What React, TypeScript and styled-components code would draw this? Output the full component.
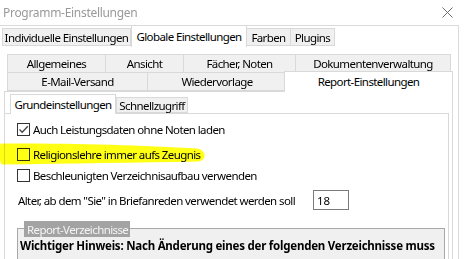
import styled, { createGlobalStyle } from 'styled-components';

const Global = createGlobalStyle`
  html, body {
    margin: 0;
    padding: 0;
    background: #fff;
  }
  body {
    font-family: "Noto Sans", "DejaVu Sans", sans-serif;
    font-size: 11.5px;
    letter-spacing: -0.6px;
    color: #000;
  }
`;

const Window = styled.div`
  width: 464px;
  height: 259px;
  overflow: hidden;
  display: flex;
  flex-direction: column;
  background: #fff;
`;

const TitleBar = styled.div`
  height: 25px;
  flex: none;
  display: flex;
  align-items: center;
  justify-content: space-between;
  padding: 0 11px 0 3px;
  color: #999;
  font-size: 12px;
  letter-spacing: -0.3px;
`;

const Client = styled.div`
  flex: 1;
  width: 458px;
  border-top: 1px solid #dadada;
  border-right: 1px solid #dadada;
  display: flex;
  flex-direction: column;
  min-height: 0;
`;

const TabRow = styled.div<{ $h: number; $pl: number }>`
  display: flex;
  align-items: flex-end;
  height: ${(p) => p.$h}px;
  padding-left: ${(p) => p.$pl}px;
  flex: none;
`;

const Tab = styled.div<{ $w: number; $h: number; $first?: boolean; $noTop?: boolean }>`
  box-sizing: border-box;
  width: ${(p) => p.$w}px;
  height: ${(p) => p.$h}px;
  background: #f0f0f0;
  border: 1px solid #d9d9d9;
  border-left: ${(p) => (p.$first ? '1px solid #d9d9d9' : 'none')};
  border-top: ${(p) => (p.$noTop ? 'none' : '1px solid #d9d9d9')};
  display: flex;
  align-items: center;
  justify-content: center;
  white-space: nowrap;
`;

const ActiveTab = styled.div<{ $w: number; $h: number; $ml?: number; $mt?: number }>`
  box-sizing: border-box;
  position: relative;
  z-index: 2;
  width: ${(p) => p.$w}px;
  height: ${(p) => p.$h}px;
  margin-left: ${(p) => p.$ml ?? 0}px;
  margin-top: ${(p) => p.$mt ?? 0}px;
  margin-bottom: -1px;
  background: #fff;
  border: 1px solid #d9d9d9;
  border-bottom: none;
  display: flex;
  align-items: center;
  justify-content: center;
  padding-bottom: 1px;
  white-space: nowrap;
`;

const Page = styled.div`
  flex: 1;
  display: flex;
  flex-direction: column;
  padding-top: 8px;
  min-height: 0;
`;

const MultiRows = styled.div`
  display: flex;
  flex-direction: column;
  padding-left: 7px;
`;

const ReportPanel = styled.div`
  flex: 1;
  margin-left: 4px;
  width: 449px;
  box-sizing: border-box;
  border: 1px solid #d9d9d9;
  border-bottom: none;
  display: flex;
  flex-direction: column;
  min-height: 0;
`;

const SubPanel = styled.div`
  flex: 1;
  position: relative;
  margin-right: 3px;
  border-top: 1px solid #d9d9d9;
  border-right: 1px solid #d9d9d9;
  padding-left: 12px;
  padding-right: 3px;
  display: flex;
  flex-direction: column;
`;

const CheckRow = styled.label<{ $mt: number }>`
  position: relative;
  display: flex;
  align-items: center;
  height: 13px;
  margin-top: ${(p) => p.$mt}px;
  gap: 3px;
  white-space: nowrap;
`;

const Box = styled.span`
  box-sizing: border-box;
  width: 13px;
  height: 13px;
  flex: none;
  border: 1px solid #333;
  background: #fff;
  display: flex;
  align-items: center;
  justify-content: center;
`;

const Highlight = styled.svg`
  position: absolute;
  left: -17px;
  top: -5px;
  width: 210px;
  height: 22px;
  mix-blend-mode: multiply;
  pointer-events: none;
`;

const FieldRow = styled.div`
  display: grid;
  grid-template-columns: 295px 36px;
  align-items: center;
  margin-top: 8px;
  padding-left: 1px;
  white-space: nowrap;
`;

const NumberInput = styled.div`
  box-sizing: border-box;
  height: 20px;
  border: 1px solid #7a7a7a;
  padding-left: 3px;
  display: flex;
  align-items: center;
  letter-spacing: -0.2px;
`;

const GroupBox = styled.div`
  margin-top: 18px;
  flex: 1;
  border: 1px solid #a8a8a8;
  border-bottom: none;
  background: #f0f0f0;
  display: flex;
  flex-direction: column;
`;

const Legend = styled.div`
  align-self: flex-start;
  margin: -8px 0 0 6px;
  height: 16px;
  width: 106px;
  box-sizing: border-box;
  padding-left: 3px;
  background: #a3a3a3;
  color: #f4f4f4;
  display: flex;
  align-items: center;
  white-space: nowrap;
`;

const Notice = styled.div`
  margin-top: 1px;
  padding-left: 2px;
  font-weight: bold;
  line-height: 16px;
  white-space: nowrap;
  letter-spacing: -0.23px;
`;

const CloseIcon = () => (
  <svg width="11" height="11" viewBox="0 0 11 11">
    <path d="M0.5 0.5 L10.5 10.5 M10.5 0.5 L0.5 10.5" stroke="#6b6b6b" strokeWidth="1" fill="none" />
  </svg>
);

const Check = () => (
  <svg width="11" height="11" viewBox="0 0 11 11">
    <path d="M1.5 5.5 L4.2 8.3 L9.8 2.2" stroke="#444" strokeWidth="1.3" fill="none" />
  </svg>
);

export default function App() {
  return (
    <>
      <Global />
      <Window>
        <TitleBar>
          <span>Programm-Einstellungen</span>
          <CloseIcon />
        </TitleBar>
        <Client>
          <TabRow $h={20} $pl={2}>
            <Tab $w={129} $h={18} $first>Individuelle Einstellungen</Tab>
            <ActiveTab $w={116} $h={22} $ml={0} $mt={-1}>Globale Einstellungen</ActiveTab>
            <Tab $w={44} $h={18}>Farben</Tab>
            <Tab $w={44} $h={18}>Plugins</Tab>
          </TabRow>
          <Page>
            <MultiRows>
              <TabRow $h={19} $pl={0}>
                <Tab $w={99} $h={19} $first>Allgemeines</Tab>
                <Tab $w={78} $h={19}>Ansicht</Tab>
                <Tab $w={112} $h={19}>Fächer, Noten</Tab>
                <Tab $w={155} $h={19}>Dokumentenverwaltung</Tab>
              </TabRow>
              <TabRow $h={18} $pl={0}>
                <Tab $w={141} $h={18} $first $noTop>E-Mail-Versand</Tab>
                <Tab $w={139} $h={18} $noTop>Wiedervorlage</Tab>
                <ActiveTab $w={169} $h={21} $ml={-3} $mt={-3}>Report-Einstellungen</ActiveTab>
              </TabRow>
            </MultiRows>
            <ReportPanel>
              <TabRow $h={21} $pl={5}>
                <ActiveTab $w={106} $h={20}>Grundeinstellungen</ActiveTab>
                <Tab $w={72} $h={16} $first>Schnellzugriff</Tab>
              </TabRow>
              <SubPanel>
                <CheckRow $mt={9}>
                  <Box><Check /></Box>
                  Auch Leistungsdaten ohne Noten laden
                </CheckRow>
                <CheckRow $mt={12}>
                  <Highlight viewBox="0 0 210 22">
                    <path
                      d="M1 0.5 C60 0 140 2 197 5.5 C207 7 207 18 198 18.5 C140 19.5 70 20.5 2 21.5 C-1 21.5 -1 0.5 1 0.5 Z"
                      fill="#ffff14"
                    />
                  </Highlight>
                  <Box />
                  Religionslehre immer aufs Zeugnis
                </CheckRow>
                <CheckRow $mt={8}>
                  <Box />
                  Beschleunigten Verzeichnisaufbau verwenden
                </CheckRow>
                <FieldRow>
                  <span>Alter, ab dem "Sie" in Briefanreden verwendet werden soll</span>
                  <NumberInput>18</NumberInput>
                </FieldRow>
                <GroupBox>
                  <Legend>Report-Verzeichnisse</Legend>
                  <Notice>Wichtiger Hinweis: Nach Änderung eines der folgenden Verzeichnisse muss</Notice>
                </GroupBox>
              </SubPanel>
            </ReportPanel>
          </Page>
        </Client>
      </Window>
    </>
  );
}
